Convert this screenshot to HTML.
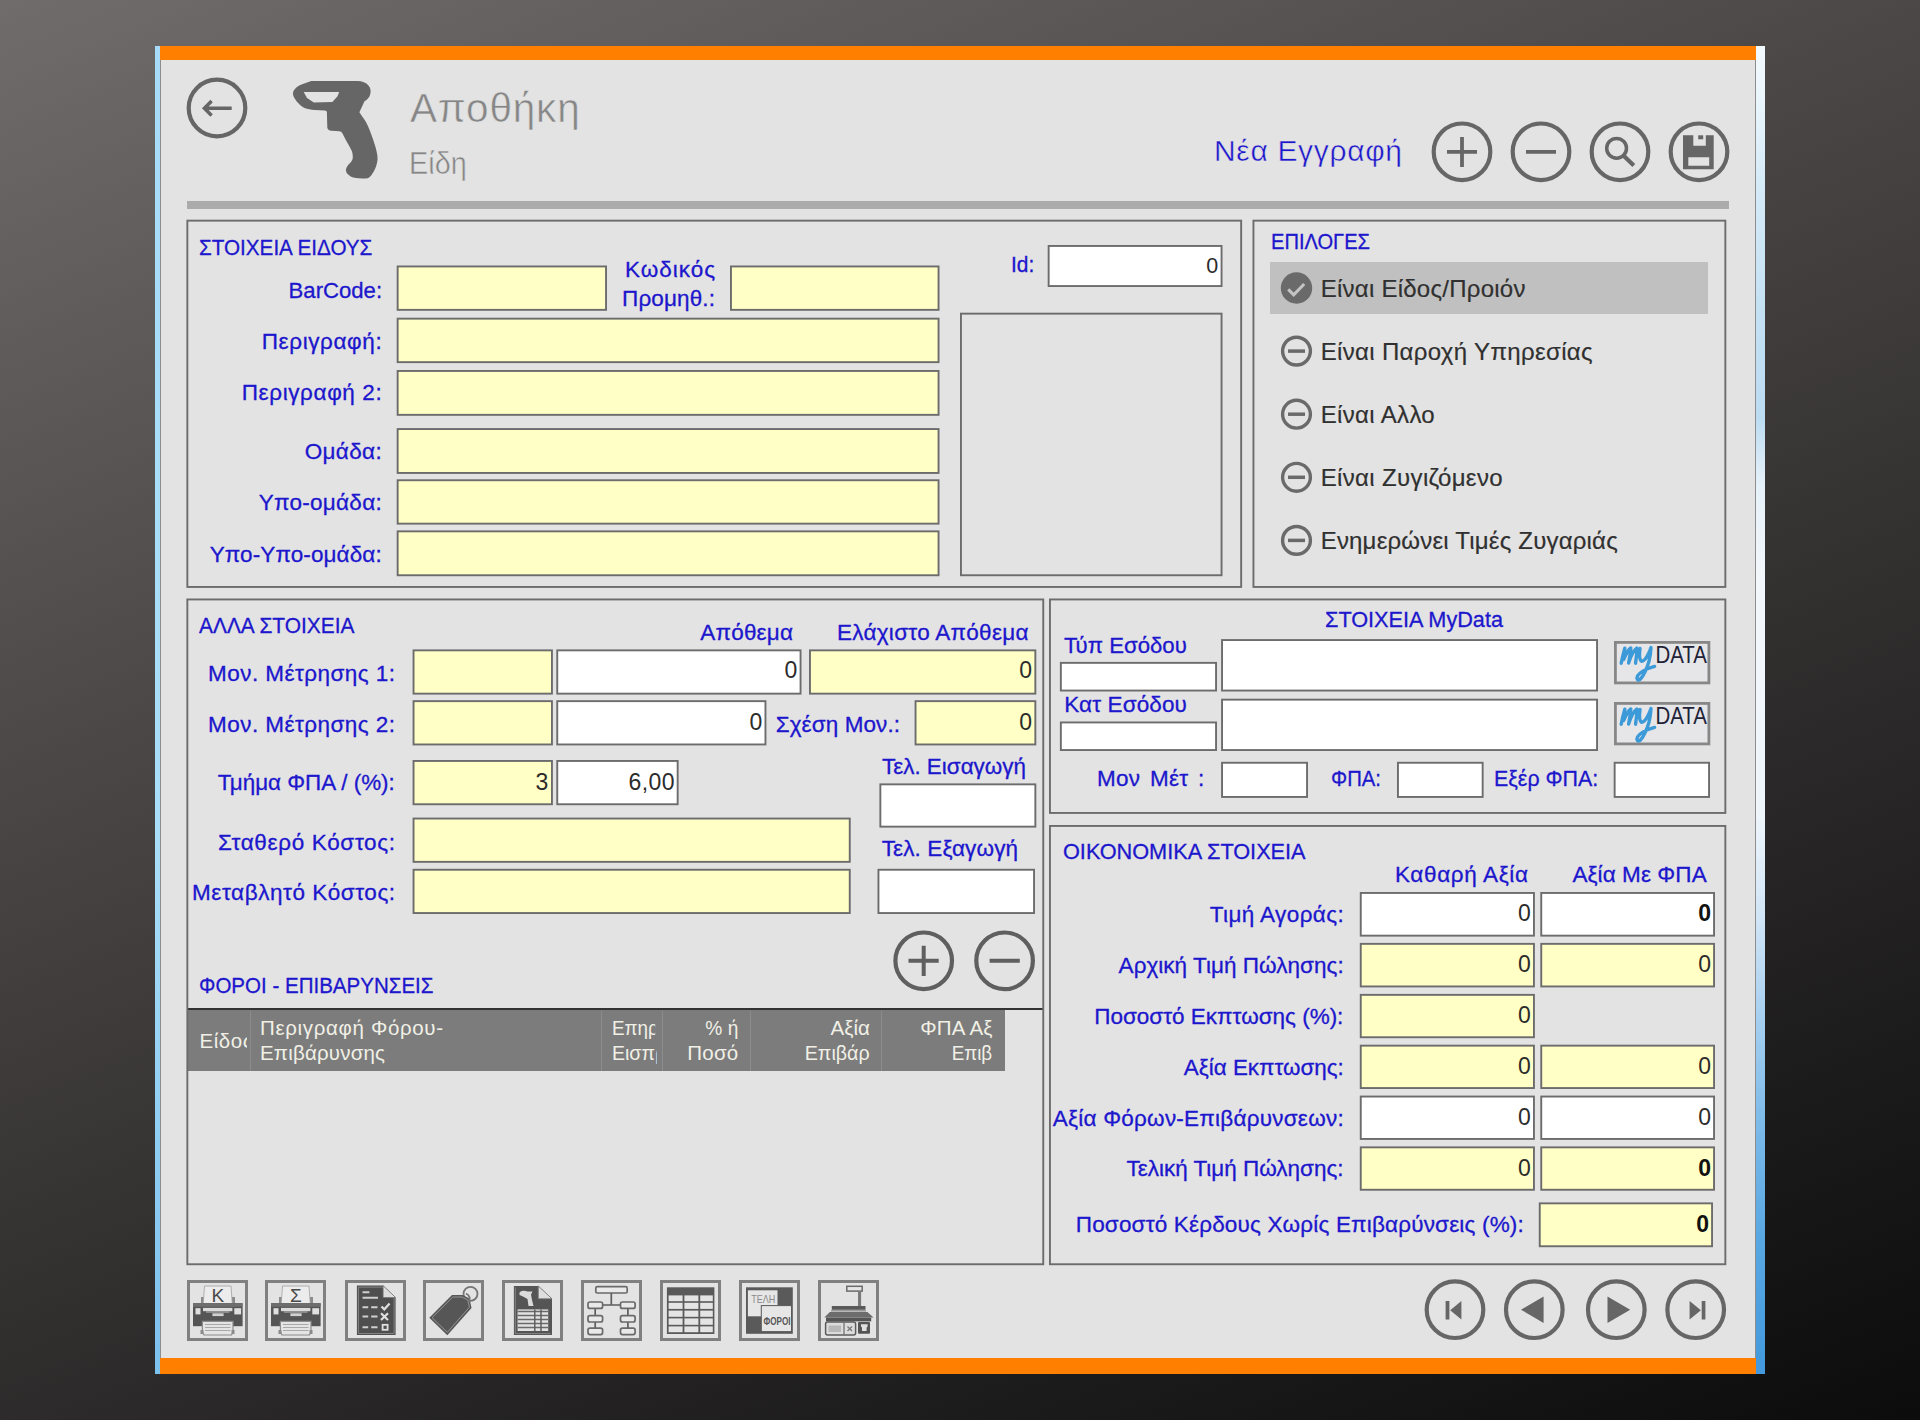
<!DOCTYPE html>
<html lang="el">
<head>
<meta charset="utf-8">
<title>Αποθήκη - Είδη</title>
<style>
html,body{margin:0;padding:0}
body{width:1920px;height:1420px;overflow:hidden;position:relative;
 font-family:"Liberation Sans",sans-serif;
 background:linear-gradient(158.3deg,#706c6b 0%,#4b4746 36%,#2b2929 67%,#0c0c0c 100%);}
#win{position:absolute;left:0;top:0;width:1920px;height:1420px}
.b{position:absolute;box-sizing:border-box}
.t{position:absolute;white-space:pre;margin:0;padding:0}
svg{position:absolute;overflow:visible}
</style>
</head>
<body>
<div id="win">
<div class="b" style="left:155.0px;top:46.0px;width:5.5px;height:1328.0px;background:linear-gradient(180deg,#a6dcfa 0%,#a9def9 60%,#7cc0ee 100%);"></div>
<div class="b" style="left:1756.0px;top:46.0px;width:9.0px;height:1328.0px;background:linear-gradient(180deg,#f3fafe 0%,#eaf5fc 4%,#d6ebf8 10%,#c4e1f4 20%,#bcdcf2 28%,#e6f1f9 33%,#f2f7fb 40%,#eef5fb 58%,#cfe4f6 66%,#a2cdef 74%,#78b8e8 82%,#58a7e2 90%,#4399dc 100%);"></div>
<div class="b" style="left:160.0px;top:46.0px;width:1596.0px;height:1328.0px;background:#ff8000;"></div>
<div class="b" style="left:160.0px;top:60.0px;width:1596.0px;height:1298.0px;background:#e3e3e3;"></div>
<div class="b" style="left:160.0px;top:60.0px;width:1.0px;height:1298.0px;background:#8e8e8e;"></div>
<div class="b" style="left:1754.5px;top:60.0px;width:1.5px;height:1298.0px;background:#8e8e8e;"></div>
<div class="b" style="left:187.0px;top:201.0px;width:1542.0px;height:8.0px;background:#ababab;"></div>
<div class="b" style="left:1270.4px;top:262.0px;width:437.8px;height:52.0px;background:#c0c0c0;"></div>
<div class="b" style="left:187.5px;top:1008.0px;width:855.0px;height:2.0px;background:#333333;"></div>
<div class="b" style="left:188.0px;top:1010.0px;width:817.0px;height:60.6px;background:#7c7c7c;"></div>
<div class="b" style="left:249.5px;top:1010.5px;width:1.0px;height:60.1px;background:#8c8c8c;"></div>
<div class="b" style="left:600.9px;top:1010.5px;width:1.0px;height:60.1px;background:#8c8c8c;"></div>
<div class="b" style="left:661.7px;top:1010.5px;width:1.0px;height:60.1px;background:#8c8c8c;"></div>
<div class="b" style="left:749.9px;top:1010.5px;width:1.0px;height:60.1px;background:#8c8c8c;"></div>
<div class="b" style="left:880.5px;top:1010.5px;width:1.0px;height:60.1px;background:#8c8c8c;"></div>
<svg style="left:0;top:0" width="1920" height="1420" viewBox="0 0 1920 1420"><rect x="187.35" y="220.65" width="1053.80" height="366.30" fill="none" stroke="#6c6c6c" stroke-width="1.9"/><rect x="397.65" y="266.45" width="208.40" height="43.40" fill="#ffffc6" stroke="#6c6c6c" stroke-width="1.9"/><rect x="730.95" y="266.45" width="207.60" height="43.40" fill="#ffffc6" stroke="#6c6c6c" stroke-width="1.9"/><rect x="397.65" y="318.65" width="540.90" height="43.50" fill="#ffffc6" stroke="#6c6c6c" stroke-width="1.9"/><rect x="397.65" y="370.95" width="540.90" height="43.90" fill="#ffffc6" stroke="#6c6c6c" stroke-width="1.9"/><rect x="397.65" y="429.05" width="540.90" height="43.90" fill="#ffffc6" stroke="#6c6c6c" stroke-width="1.9"/><rect x="397.65" y="480.25" width="540.90" height="43.40" fill="#ffffc6" stroke="#6c6c6c" stroke-width="1.9"/><rect x="397.65" y="531.35" width="540.90" height="43.90" fill="#ffffc6" stroke="#6c6c6c" stroke-width="1.9"/><rect x="1048.65" y="245.95" width="172.90" height="40.10" fill="#ffffff" stroke="#6c6c6c" stroke-width="1.9"/><rect x="960.95" y="313.65" width="260.60" height="261.60" fill="none" stroke="#6c6c6c" stroke-width="1.9"/><rect x="1253.45" y="220.65" width="471.90" height="366.30" fill="none" stroke="#6c6c6c" stroke-width="1.9"/><rect x="187.35" y="599.45" width="855.90" height="664.80" fill="none" stroke="#6c6c6c" stroke-width="1.9"/><rect x="413.55" y="650.35" width="138.40" height="43.30" fill="#ffffc6" stroke="#6c6c6c" stroke-width="1.9"/><rect x="557.25" y="650.35" width="243.30" height="43.30" fill="#ffffff" stroke="#6c6c6c" stroke-width="1.9"/><rect x="809.95" y="650.35" width="225.40" height="43.30" fill="#ffffc6" stroke="#6c6c6c" stroke-width="1.9"/><rect x="413.55" y="701.15" width="138.40" height="43.30" fill="#ffffc6" stroke="#6c6c6c" stroke-width="1.9"/><rect x="557.25" y="701.15" width="208.20" height="43.30" fill="#ffffff" stroke="#6c6c6c" stroke-width="1.9"/><rect x="915.55" y="701.15" width="119.80" height="43.30" fill="#ffffc6" stroke="#6c6c6c" stroke-width="1.9"/><rect x="413.55" y="760.95" width="138.40" height="43.30" fill="#ffffc6" stroke="#6c6c6c" stroke-width="1.9"/><rect x="557.25" y="760.95" width="120.40" height="43.30" fill="#ffffff" stroke="#6c6c6c" stroke-width="1.9"/><rect x="413.55" y="818.55" width="436.20" height="43.30" fill="#ffffc6" stroke="#6c6c6c" stroke-width="1.9"/><rect x="413.55" y="869.75" width="436.20" height="43.30" fill="#ffffc6" stroke="#6c6c6c" stroke-width="1.9"/><rect x="880.35" y="784.35" width="155.00" height="42.30" fill="#ffffff" stroke="#6c6c6c" stroke-width="1.9"/><rect x="878.45" y="869.75" width="155.60" height="43.30" fill="#ffffff" stroke="#6c6c6c" stroke-width="1.9"/><rect x="1049.95" y="599.45" width="675.40" height="213.50" fill="none" stroke="#6c6c6c" stroke-width="1.9"/><rect x="1060.85" y="662.85" width="155.20" height="27.70" fill="#ffffff" stroke="#6c6c6c" stroke-width="1.9"/><rect x="1222.05" y="640.05" width="375.00" height="50.50" fill="#ffffff" stroke="#6c6c6c" stroke-width="1.9"/><rect x="1060.85" y="722.45" width="155.20" height="27.60" fill="#ffffff" stroke="#6c6c6c" stroke-width="1.9"/><rect x="1222.05" y="699.65" width="375.00" height="50.40" fill="#ffffff" stroke="#6c6c6c" stroke-width="1.9"/><rect x="1222.05" y="762.75" width="85.00" height="34.20" fill="#ffffff" stroke="#6c6c6c" stroke-width="1.9"/><rect x="1397.95" y="762.75" width="84.70" height="34.20" fill="#ffffff" stroke="#6c6c6c" stroke-width="1.9"/><rect x="1614.65" y="762.75" width="94.40" height="34.20" fill="#ffffff" stroke="#6c6c6c" stroke-width="1.9"/><rect x="1049.95" y="825.95" width="675.40" height="438.30" fill="none" stroke="#6c6c6c" stroke-width="1.9"/><rect x="1360.75" y="892.95" width="173.20" height="42.70" fill="#ffffff" stroke="#6c6c6c" stroke-width="1.9"/><rect x="1541.25" y="892.95" width="172.80" height="42.70" fill="#ffffff" stroke="#6c6c6c" stroke-width="1.9"/><rect x="1360.75" y="943.85" width="173.20" height="42.60" fill="#ffffc6" stroke="#6c6c6c" stroke-width="1.9"/><rect x="1541.25" y="943.85" width="172.80" height="42.60" fill="#ffffc6" stroke="#6c6c6c" stroke-width="1.9"/><rect x="1360.75" y="994.85" width="173.20" height="42.40" fill="#ffffc6" stroke="#6c6c6c" stroke-width="1.9"/><rect x="1360.75" y="1045.65" width="173.20" height="42.40" fill="#ffffc6" stroke="#6c6c6c" stroke-width="1.9"/><rect x="1541.25" y="1045.65" width="172.80" height="42.40" fill="#ffffc6" stroke="#6c6c6c" stroke-width="1.9"/><rect x="1360.75" y="1096.55" width="173.20" height="42.40" fill="#ffffff" stroke="#6c6c6c" stroke-width="1.9"/><rect x="1541.25" y="1096.55" width="172.80" height="42.40" fill="#ffffff" stroke="#6c6c6c" stroke-width="1.9"/><rect x="1360.75" y="1147.35" width="173.20" height="42.40" fill="#ffffc6" stroke="#6c6c6c" stroke-width="1.9"/><rect x="1541.25" y="1147.35" width="172.80" height="42.40" fill="#ffffc6" stroke="#6c6c6c" stroke-width="1.9"/><rect x="1539.75" y="1203.35" width="172.30" height="42.90" fill="#ffffc6" stroke="#6c6c6c" stroke-width="1.9"/></svg>
<div class="t" style="top:85px;font-size:40.5px;line-height:46px;color:#868686;letter-spacing:0.83px;-webkit-text-stroke:0.55px #e3e3e3;left:410.0px;">Αποθήκη</div>
<div class="t" style="top:145px;font-size:31.5px;line-height:36px;color:#868686;-webkit-text-stroke:0.5px #e3e3e3;left:409.0px;transform:scaleX(0.915);transform-origin:left center;">Είδη</div>
<div class="t" style="top:134px;font-size:30px;line-height:33px;color:#1c16cc;letter-spacing:0.67px;-webkit-text-stroke:0.45px #e3e3e3;left:1214.0px;">Νέα Εγγραφή</div>
<div class="t" style="top:235px;font-size:22px;line-height:25px;color:#1c16cc;-webkit-text-stroke:0.3px;left:199.0px;transform:scaleX(0.939);transform-origin:left center;">ΣΤΟΙΧΕΙΑ ΕΙΔΟΥΣ</div>
<div class="t" style="top:278px;font-size:22.5px;line-height:25px;color:#1c16cc;-webkit-text-stroke:0.3px;right:1538.3px;transform:scaleX(0.983);transform-origin:right center;">BarCode:</div>
<div class="t" style="top:257px;font-size:22.5px;line-height:25px;color:#1c16cc;letter-spacing:0.97px;-webkit-text-stroke:0.3px;right:1204.0px;">Κωδικός</div>
<div class="t" style="top:286px;font-size:22.5px;line-height:25px;color:#1c16cc;letter-spacing:0.13px;-webkit-text-stroke:0.3px;right:1204.9px;">Προμηθ.:</div>
<div class="t" style="top:329px;font-size:22.5px;line-height:25px;color:#1c16cc;letter-spacing:0.61px;-webkit-text-stroke:0.3px;right:1537.7px;">Περιγραφή:</div>
<div class="t" style="top:380px;font-size:22.5px;line-height:25px;color:#1c16cc;letter-spacing:0.61px;-webkit-text-stroke:0.3px;right:1537.7px;">Περιγραφή 2:</div>
<div class="t" style="top:439px;font-size:22.5px;line-height:25px;color:#1c16cc;letter-spacing:0.35px;-webkit-text-stroke:0.3px;right:1538.0px;">Ομάδα:</div>
<div class="t" style="top:490px;font-size:22.5px;line-height:25px;color:#1c16cc;letter-spacing:0.28px;-webkit-text-stroke:0.3px;right:1538.0px;">Υπο-ομάδα:</div>
<div class="t" style="top:542px;font-size:22.5px;line-height:25px;color:#1c16cc;letter-spacing:0.10px;-webkit-text-stroke:0.3px;right:1538.2px;">Υπο-Υπο-ομάδα:</div>
<div class="t" style="top:252px;font-size:22.5px;line-height:25px;color:#1c16cc;-webkit-text-stroke:0.3px;left:1011.0px;transform:scaleX(0.931);transform-origin:left center;">Id:</div>
<div class="t" style="top:254px;font-size:21.5px;line-height:24px;color:#2b2b2b;right:701.7px;">0</div>
<div class="t" style="top:229px;font-size:22px;line-height:25px;color:#1c16cc;-webkit-text-stroke:0.3px;left:1271.0px;transform:scaleX(0.913);transform-origin:left center;">ΕΠΙΛΟΓΕΣ</div>
<div class="t" style="top:275px;font-size:24px;line-height:27px;color:#303030;letter-spacing:0.25px;-webkit-text-stroke:0.2px;left:1320.7px;">Είναι Είδος/Προιόν</div>
<div class="t" style="top:338px;font-size:24px;line-height:27px;color:#303030;letter-spacing:0.34px;-webkit-text-stroke:0.2px;left:1320.7px;">Είναι Παροχή Υπηρεσίας</div>
<div class="t" style="top:401px;font-size:24px;line-height:27px;color:#303030;letter-spacing:0.35px;-webkit-text-stroke:0.2px;left:1320.7px;">Είναι Αλλο</div>
<div class="t" style="top:464px;font-size:24px;line-height:27px;color:#303030;letter-spacing:0.36px;-webkit-text-stroke:0.2px;left:1320.7px;">Είναι Ζυγιζόμενο</div>
<div class="t" style="top:527px;font-size:24px;line-height:27px;color:#303030;letter-spacing:0.19px;-webkit-text-stroke:0.2px;left:1320.7px;">Ενημερώνει Τιμές Ζυγαριάς</div>
<div class="t" style="top:613px;font-size:22px;line-height:25px;color:#1c16cc;-webkit-text-stroke:0.3px;left:199.0px;transform:scaleX(0.950);transform-origin:left center;">ΑΛΛΑ ΣΤΟΙΧΕΙΑ</div>
<div class="t" style="top:620px;font-size:22.5px;line-height:25px;color:#1c16cc;letter-spacing:0.19px;-webkit-text-stroke:0.3px;left:700.3px;">Απόθεμα</div>
<div class="t" style="top:620px;font-size:22.5px;line-height:25px;color:#1c16cc;letter-spacing:0.28px;-webkit-text-stroke:0.3px;left:837.0px;">Ελάχιστο Απόθεμα</div>
<div class="t" style="top:661px;font-size:22.5px;line-height:25px;color:#1c16cc;letter-spacing:0.45px;-webkit-text-stroke:0.3px;right:1524.5px;">Μον. Μέτρησης 1:</div>
<div class="t" style="top:712px;font-size:22.5px;line-height:25px;color:#1c16cc;letter-spacing:0.45px;-webkit-text-stroke:0.3px;right:1524.5px;">Μον. Μέτρησης 2:</div>
<div class="t" style="top:770px;font-size:22.5px;line-height:25px;color:#1c16cc;-webkit-text-stroke:0.3px;right:1525.0px;transform:scaleX(0.996);transform-origin:right center;">Τμήμα ΦΠΑ / (%):</div>
<div class="t" style="top:830px;font-size:22.5px;line-height:25px;color:#1c16cc;letter-spacing:0.66px;-webkit-text-stroke:0.3px;right:1524.3px;">Σταθερό Κόστος:</div>
<div class="t" style="top:880px;font-size:22.5px;line-height:25px;color:#1c16cc;letter-spacing:0.56px;-webkit-text-stroke:0.3px;right:1524.4px;">Μεταβλητό Κόστος:</div>
<div class="t" style="top:657px;font-size:23px;line-height:26px;color:#2b2b2b;right:1122.7px;">0</div>
<div class="t" style="top:657px;font-size:23px;line-height:26px;color:#2b2b2b;right:888.0px;">0</div>
<div class="t" style="top:709px;font-size:23px;line-height:26px;color:#2b2b2b;right:1157.7px;">0</div>
<div class="t" style="top:712px;font-size:22.5px;line-height:25px;color:#1c16cc;letter-spacing:0.09px;-webkit-text-stroke:0.3px;left:775.7px;">Σχέση Μον.:</div>
<div class="t" style="top:709px;font-size:23px;line-height:26px;color:#2b2b2b;right:888.0px;">0</div>
<div class="t" style="top:769px;font-size:23px;line-height:26px;color:#2b2b2b;right:1371.7px;">3</div>
<div class="t" style="top:769px;font-size:23px;line-height:26px;color:#2b2b2b;letter-spacing:0.41px;right:1245.1px;">6,00</div>
<div class="t" style="top:754px;font-size:22.5px;line-height:25px;color:#1c16cc;-webkit-text-stroke:0.3px;left:881.7px;transform:scaleX(0.996);transform-origin:left center;">Τελ. Εισαγωγή</div>
<div class="t" style="top:836px;font-size:22.5px;line-height:25px;color:#1c16cc;letter-spacing:0.11px;-webkit-text-stroke:0.3px;left:881.7px;">Τελ. Εξαγωγή</div>
<div class="t" style="top:973px;font-size:22px;line-height:25px;color:#1c16cc;-webkit-text-stroke:0.3px;left:199.0px;transform:scaleX(0.933);transform-origin:left center;">ΦΟΡΟΙ - ΕΠΙΒΑΡΥΝΣΕΙΣ</div>
<div class="t" style="top:1029px;font-size:20.5px;line-height:23px;color:#f1f0e6;letter-spacing:0.52px;left:199.6px;width:47.2px;overflow:hidden;">Είδος</div>
<div class="t" style="top:1016px;font-size:20.5px;line-height:23px;color:#f1f0e6;letter-spacing:0.66px;left:260.0px;">Περιγραφή Φόρου-</div>
<div class="t" style="top:1041px;font-size:20.5px;line-height:23px;color:#f1f0e6;letter-spacing:0.19px;left:260.0px;">Επιβάρυνσης</div>
<div class="t" style="top:1016px;font-size:20.5px;line-height:23px;color:#f1f0e6;left:611.5px;width:47.0px;overflow:hidden;transform:scaleX(0.920);transform-origin:left center;">Επηρ</div>
<div class="t" style="top:1041px;font-size:20.5px;line-height:23px;color:#f1f0e6;left:611.5px;width:47.0px;overflow:hidden;transform:scaleX(0.953);transform-origin:left center;">Εισπρ</div>
<div class="t" style="top:1016px;font-size:20.5px;line-height:23px;color:#f1f0e6;right:1181.7px;transform:scaleX(0.934);transform-origin:right center;">% ή</div>
<div class="t" style="top:1041px;font-size:20.5px;line-height:23px;color:#f1f0e6;letter-spacing:0.24px;right:1181.5px;">Ποσό</div>
<div class="t" style="top:1016px;font-size:20.5px;line-height:23px;color:#f1f0e6;letter-spacing:0.04px;right:1050.0px;">Αξία</div>
<div class="t" style="top:1041px;font-size:20.5px;line-height:23px;color:#f1f0e6;right:1050.0px;transform:scaleX(0.960);transform-origin:right center;">Επιβάρ</div>
<div class="t" style="top:1016px;font-size:20.5px;line-height:23px;color:#f1f0e6;letter-spacing:0.22px;right:927.3px;">ΦΠΑ Αξ</div>
<div class="t" style="top:1041px;font-size:20.5px;line-height:23px;color:#f1f0e6;right:927.5px;transform:scaleX(0.917);transform-origin:right center;">Επιβ</div>
<div class="t" style="top:607px;font-size:22px;line-height:25px;color:#1c16cc;-webkit-text-stroke:0.3px;left:1325.0px;transform:scaleX(0.985);transform-origin:left center;">ΣΤΟΙΧΕΙΑ MyData</div>
<div class="t" style="top:633px;font-size:22.5px;line-height:25px;color:#1c16cc;-webkit-text-stroke:0.3px;left:1064.2px;transform:scaleX(0.985);transform-origin:left center;">Τύπ Εσόδου</div>
<div class="t" style="top:692px;font-size:22.5px;line-height:25px;color:#1c16cc;letter-spacing:0.12px;-webkit-text-stroke:0.3px;left:1064.2px;">Κατ Εσόδου</div>
<div class="t" style="top:766px;font-size:22.5px;line-height:25px;color:#1c16cc;letter-spacing:0.30px;word-spacing:3px;-webkit-text-stroke:0.3px;left:1097.0px;">Μον Μέτ :</div>
<div class="t" style="top:766px;font-size:22.5px;line-height:25px;color:#1c16cc;-webkit-text-stroke:0.3px;left:1330.6px;transform:scaleX(0.901);transform-origin:left center;">ΦΠΑ:</div>
<div class="t" style="top:766px;font-size:22.5px;line-height:25px;color:#1c16cc;-webkit-text-stroke:0.3px;left:1493.7px;transform:scaleX(0.951);transform-origin:left center;">Εξέρ ΦΠΑ:</div>
<div class="t" style="top:839px;font-size:22px;line-height:25px;color:#1c16cc;-webkit-text-stroke:0.3px;left:1062.5px;transform:scaleX(0.986);transform-origin:left center;">ΟΙΚΟΝΟΜΙΚΑ ΣΤΟΙΧΕΙΑ</div>
<div class="t" style="top:862px;font-size:22.5px;line-height:25px;color:#1c16cc;letter-spacing:0.63px;-webkit-text-stroke:0.3px;left:1395.0px;">Καθαρή Αξία</div>
<div class="t" style="top:862px;font-size:22.5px;line-height:25px;color:#1c16cc;letter-spacing:0.07px;-webkit-text-stroke:0.3px;left:1572.4px;">Αξία Με ΦΠΑ</div>
<div class="t" style="top:902px;font-size:22.5px;line-height:25px;color:#1c16cc;letter-spacing:0.39px;-webkit-text-stroke:0.3px;right:575.9px;">Τιμή Αγοράς:</div>
<div class="t" style="top:900px;font-size:23px;line-height:26px;color:#2b2b2b;right:389.3px;">0</div>
<div class="t" style="top:900px;font-size:23px;line-height:26px;color:#111111;font-weight:700;right:209.0px;">0</div>
<div class="t" style="top:953px;font-size:22.5px;line-height:25px;color:#1c16cc;letter-spacing:0.03px;-webkit-text-stroke:0.3px;right:576.3px;">Αρχική Τιμή Πώλησης:</div>
<div class="t" style="top:951px;font-size:23px;line-height:26px;color:#2b2b2b;right:389.3px;">0</div>
<div class="t" style="top:951px;font-size:23px;line-height:26px;color:#2b2b2b;right:209.0px;">0</div>
<div class="t" style="top:1004px;font-size:22.5px;line-height:25px;color:#1c16cc;-webkit-text-stroke:0.3px;right:576.3px;transform:scaleX(0.999);transform-origin:right center;">Ποσοστό Εκπτωσης (%):</div>
<div class="t" style="top:1002px;font-size:23px;line-height:26px;color:#2b2b2b;right:389.3px;">0</div>
<div class="t" style="top:1055px;font-size:22.5px;line-height:25px;color:#1c16cc;-webkit-text-stroke:0.3px;right:576.3px;transform:scaleX(0.995);transform-origin:right center;">Αξία Εκπτωσης:</div>
<div class="t" style="top:1053px;font-size:23px;line-height:26px;color:#2b2b2b;right:389.3px;">0</div>
<div class="t" style="top:1053px;font-size:23px;line-height:26px;color:#2b2b2b;right:209.0px;">0</div>
<div class="t" style="top:1106px;font-size:22.5px;line-height:25px;color:#1c16cc;letter-spacing:0.23px;-webkit-text-stroke:0.3px;right:576.1px;">Αξία Φόρων-Επιβάρυνσεων:</div>
<div class="t" style="top:1104px;font-size:23px;line-height:26px;color:#2b2b2b;right:389.3px;">0</div>
<div class="t" style="top:1104px;font-size:23px;line-height:26px;color:#2b2b2b;right:209.0px;">0</div>
<div class="t" style="top:1156px;font-size:22.5px;line-height:25px;color:#1c16cc;-webkit-text-stroke:0.3px;right:576.3px;transform:scaleX(0.998);transform-origin:right center;">Τελική Τιμή Πώλησης:</div>
<div class="t" style="top:1155px;font-size:23px;line-height:26px;color:#2b2b2b;right:389.3px;">0</div>
<div class="t" style="top:1155px;font-size:23px;line-height:26px;color:#111111;font-weight:700;right:209.0px;">0</div>
<div class="t" style="top:1212px;font-size:22.5px;line-height:25px;color:#1c16cc;letter-spacing:0.17px;-webkit-text-stroke:0.3px;right:396.1px;">Ποσοστό Κέρδους Χωρίς Επιβαρύνσεις (%):</div>
<div class="t" style="top:1211px;font-size:23px;line-height:26px;color:#111111;font-weight:700;right:211.0px;">0</div>
<svg style="left:0px;top:0px" width="1920" height="1420" viewBox="0 0 1920 1420"><circle cx="217" cy="108" r="28.3" fill="none" stroke="#666666" stroke-width="4.2"/><path d="M231.7 108.3H204.6M211.6 101.1L204.4 108.3L211.6 115.5" fill="none" stroke="#666666" stroke-width="3.5" stroke-linejoin="miter"/><path fill="#666" fill-rule="evenodd" d="M311.3 81H357.7C362 81 366.2 82.5 368.5 85.5C371 88.5 371.3 92 369.6 96.2C368 99 366 100.5 364.5 101.3L359.4 112.3C362 116 364 119 366.2 122.4C369 128 371 133 373 139.3C375 145 376.5 150 377.2 154.5C377.8 158 377.6 161 376.8 163.8C375.8 168 374.3 171 372.1 174C371 176 369.5 177.5 367.9 178.2C363 178.8 359 178.6 354.4 177.8C352 177.3 350 176.3 348.5 174.8C346.8 173.3 345.8 171.5 345.9 169.7C346.3 167.5 347.7 165.6 349.3 163.8C350.8 162.2 352.2 160.6 352.7 158.7C353 156 352.6 153.5 351.8 151.1C350.5 148 348.7 145 346.8 141.8C345.4 139 344 136 342.5 133.4C341.7 132 340.6 131.4 339.2 131.3L331.5 130.8C329 130.5 327.4 129.3 327.3 127.5L326.9 112.3C326.8 111.2 326 110.7 324.8 110.6L314.6 110.1C311 109.8 307.5 109.1 304.5 108C302 106.8 299.9 105.1 298.2 103C296.2 101 294.6 98.7 293.5 96.2C292.8 94.5 292.8 92.8 293.5 91.1C294.3 89.4 295.5 88 296.9 86.9C298.7 85.6 300.7 84.6 302.8 83.9ZM303.7 92L307 97.9L313.8 102.5L332.4 102.1L337.5 96.2L339.2 92Z"/><circle cx="1462" cy="151.8" r="28.3" fill="none" stroke="#666666" stroke-width="4.2"/><circle cx="1541" cy="151.8" r="28.3" fill="none" stroke="#666666" stroke-width="4.2"/><circle cx="1620" cy="151.8" r="28.3" fill="none" stroke="#666666" stroke-width="4.2"/><circle cx="1699" cy="151.8" r="28.3" fill="none" stroke="#666666" stroke-width="4.2"/><path d="M1447 151.8H1477M1462 137V167M1526 151.8H1556" stroke="#666666" stroke-width="3.8" fill="none"/><circle cx="1616.6" cy="148.3" r="9.9" fill="none" stroke="#666666" stroke-width="3.5"/><path d="M1623.4 155.6L1633.8 165.6" stroke="#666666" stroke-width="4.2"/><path fill="#666666" fill-rule="evenodd" d="M1683 135.3H1713.7V169.2H1683ZM1693.3 135.3V145.8H1705.8V135.3ZM1688.3 157.2V165.8H1709.2V157.2Z"/><rect x="1698.2" y="135.3" width="5" height="4" fill="#666666"/><circle cx="1296.5" cy="288" r="15.7" fill="#6a6a6a"/><path d="M1288.2 289.3L1293.7 294.8L1304.2 284" fill="none" stroke="#c4c4c4" stroke-width="3.1"/><circle cx="1296.5" cy="351.1" r="13.9" fill="none" stroke="#6a6a6a" stroke-width="3.4"/><path d="M1288 351.1H1305" stroke="#6a6a6a" stroke-width="3.5"/><circle cx="1296.5" cy="414.2" r="13.9" fill="none" stroke="#6a6a6a" stroke-width="3.4"/><path d="M1288 414.2H1305" stroke="#6a6a6a" stroke-width="3.5"/><circle cx="1296.5" cy="477.3" r="13.9" fill="none" stroke="#6a6a6a" stroke-width="3.4"/><path d="M1288 477.3H1305" stroke="#6a6a6a" stroke-width="3.5"/><circle cx="1296.5" cy="540.4" r="13.9" fill="none" stroke="#6a6a6a" stroke-width="3.4"/><path d="M1288 540.4H1305" stroke="#6a6a6a" stroke-width="3.5"/><circle cx="923.7" cy="960.8" r="28.3" fill="none" stroke="#5f5f5f" stroke-width="4.2"/><circle cx="1004.6" cy="960.8" r="28.3" fill="none" stroke="#5f5f5f" stroke-width="4.2"/><path d="M908.5 960.8H938.7M923.7 945.7V976M989.6 960.8H1019.8" stroke="#5f5f5f" stroke-width="4" fill="none"/><circle cx="1455" cy="1309.7" r="28.3" fill="none" stroke="#666666" stroke-width="4.2"/><circle cx="1534.3" cy="1309.7" r="28.3" fill="none" stroke="#666666" stroke-width="4.2"/><circle cx="1616.3" cy="1309.7" r="28.3" fill="none" stroke="#666666" stroke-width="4.2"/><circle cx="1695.7" cy="1309.7" r="28.3" fill="none" stroke="#666666" stroke-width="4.2"/><path fill="#666666" d="M1445.6 1301H1449.4V1319.6H1445.6ZM1450.2 1310.3L1461.4 1301V1319.6ZM1521 1309.7L1543.6 1296.6V1322.9ZM1607.5 1296.6L1630.2 1309.7L1607.5 1322.9ZM1689.6 1301L1700.9 1310.3L1689.6 1319.6ZM1701.7 1301H1705.4V1319.6H1701.7Z"/></svg>
<svg style="left:186.5px;top:1279.5px" width="61" height="61" viewBox="0 0 61 61"><rect x="1.5" y="1.5" width="58" height="58" fill="none" stroke="#808080" stroke-width="3"/><path d="M14 17h3v8h-3zM45 17h3v8h-3z" fill="#8a8a8a"/><path d="M17.5 6L44 6L45.3 24H16.2Z" fill="#ececec" stroke="#a0a0a0" stroke-width="0.8"/><rect x="6" y="23.2" width="49.6" height="23" fill="#555555"/><rect x="6" y="23.2" width="49.6" height="3.6" fill="#6e6e6e"/><rect x="8.5" y="28.2" width="5" height="6.2" fill="#e0e0e0"/><rect x="47.3" y="28.2" width="6.8" height="6.2" fill="#e0e0e0"/><rect x="16" y="27.9" width="29.4" height="3.3" fill="#dcdcdc"/><rect x="19" y="31.2" width="23.5" height="1.6" fill="#9a9a9a"/><rect x="25.4" y="33.3" width="11.2" height="2.8" fill="#d0d0d0"/><path d="M15.4 41.3H46V52l-1.5 3H17L15.4 52Z" fill="#e4e4e4" stroke="#8c8c8c" stroke-width="1.2"/><path d="M18 44.5H43.5M18 47.5H43.5M18 50.5H43.5" stroke="#a8a8a8" stroke-width="1.2"/><path d="M13.5 50h3v4h-3zM44.5 50h3v4h-3z" fill="#8a8a8a"/><text x="30.8" y="22.3" font-family="Liberation Sans, sans-serif" font-size="19" text-anchor="middle" fill="#4a4a4a">Κ</text></svg>
<svg style="left:265.3px;top:1279.5px" width="61" height="61" viewBox="0 0 61 61"><rect x="1.5" y="1.5" width="58" height="58" fill="none" stroke="#808080" stroke-width="3"/><path d="M14 17h3v8h-3zM45 17h3v8h-3z" fill="#8a8a8a"/><path d="M17.5 6L44 6L45.3 24H16.2Z" fill="#ececec" stroke="#a0a0a0" stroke-width="0.8"/><rect x="6" y="23.2" width="49.6" height="23" fill="#555555"/><rect x="6" y="23.2" width="49.6" height="3.6" fill="#6e6e6e"/><rect x="8.5" y="28.2" width="5" height="6.2" fill="#e0e0e0"/><rect x="47.3" y="28.2" width="6.8" height="6.2" fill="#e0e0e0"/><rect x="16" y="27.9" width="29.4" height="3.3" fill="#dcdcdc"/><rect x="19" y="31.2" width="23.5" height="1.6" fill="#9a9a9a"/><rect x="25.4" y="33.3" width="11.2" height="2.8" fill="#d0d0d0"/><path d="M15.4 41.3H46V52l-1.5 3H17L15.4 52Z" fill="#e4e4e4" stroke="#8c8c8c" stroke-width="1.2"/><path d="M18 44.5H43.5M18 47.5H43.5M18 50.5H43.5" stroke="#a8a8a8" stroke-width="1.2"/><path d="M13.5 50h3v4h-3zM44.5 50h3v4h-3z" fill="#8a8a8a"/><text x="30.8" y="22.3" font-family="Liberation Sans, sans-serif" font-size="19" text-anchor="middle" fill="#4a4a4a">Σ</text></svg>
<svg style="left:344.5px;top:1279.5px" width="61" height="61" viewBox="0 0 61 61"><rect x="1.5" y="1.5" width="58" height="58" fill="none" stroke="#808080" stroke-width="3"/><path d="M11.9 5.6H38.1L50.6 17.5V55H11.9Z" fill="#4f4f4f"/><path d="M13.4 7.1H37.5L49.1 18.1V53.5H13.4Z" fill="none" stroke="#8a8a8a" stroke-width="0.9"/><path d="M38.1 5.6L50.6 17.5H38.1Z" fill="#dedede" stroke="#777" stroke-width="0.8"/><path d="M17.5 12.2H24.4M17.5 17.8H33M17.5 27.2H23.2M26.2 27.2H32.5M17.5 36.6H23.2M26.2 36.6H32.5M17.5 47.2H23.2M26.2 47.2H32.5" stroke="#cfcfcf" stroke-width="2"/><path d="M36.5 26.5L39.3 29.3L44.6 23.6" fill="none" stroke="#e0e0e0" stroke-width="2.2"/><path d="M36 33.3L43 40M43 33.3L36 40" stroke="#e0e0e0" stroke-width="2.2"/><rect x="37.6" y="44.8" width="5" height="5" fill="none" stroke="#e0e0e0" stroke-width="1.8"/></svg>
<svg style="left:423.3px;top:1279.5px" width="61" height="61" viewBox="0 0 61 61"><rect x="1.5" y="1.5" width="58" height="58" fill="none" stroke="#808080" stroke-width="3"/><circle cx="47.5" cy="13.8" r="7" fill="none" stroke="#757575" stroke-width="1.8"/><path d="M6.3 37.7L29 15H39.5L46.5 18.5L48.5 28L24.3 55.2Z" fill="#565656"/><path d="M9 37.7L29.8 17H39L44.8 20L46.4 27.3L24.3 52.3Z" fill="none" stroke="#9c9c9c" stroke-width="0.9"/><path d="M43 13.5C46 15 47.5 18 46 22" fill="none" stroke="#757575" stroke-width="1.8"/></svg>
<svg style="left:502.3px;top:1279.5px" width="61" height="61" viewBox="0 0 61 61"><rect x="1.5" y="1.5" width="58" height="58" fill="none" stroke="#808080" stroke-width="3"/><path d="M11.9 6H36.3L50 18.8V55H11.9Z" fill="#555"/><path d="M36.3 6L50 18.8H36.3Z" fill="#dedede" stroke="#777" stroke-width="0.8"/><path d="M17.5 12.5C19 10.5 23 10.5 25.5 11.5L30.5 11.5L29 14.5L30 20L31.5 26H26.5L25.5 19L21 16.5L17.5 15Z" fill="#dcdcdc"/><rect x="15.6" y="29.4" width="30.6" height="21.6" fill="#e2e2e2"/><path d="M15.6 31.5H46.2M15.6 35.5H46.2M15.6 39.5H46.2M15.6 43.5H46.2M15.6 47.5H46.2" stroke="#6a6a6a" stroke-width="1.5"/><path d="M32.8 29.4V51M39 29.4V51" stroke="#5a5a5a" stroke-width="1.4"/><path d="M13.3 7.4V53.6H48.6" fill="none" stroke="#8a8a8a" stroke-width="0.9"/></svg>
<svg style="left:581.2px;top:1279.5px" width="61" height="61" viewBox="0 0 61 61"><rect x="1.5" y="1.5" width="58" height="58" fill="none" stroke="#808080" stroke-width="3"/><path d="M30.3 13V25M21 25H40M14.2 28V49M46.9 28V49" stroke="#5e5e5e" stroke-width="1.7" fill="none"/><rect x="14.8" y="6.6" width="31.4" height="6.4" rx="1.6" fill="#e9e9e9" stroke="#6a6a6a" stroke-width="1.7"/><rect x="7" y="22" width="14.6" height="6.4" rx="2" fill="#e9e9e9" stroke="#6a6a6a" stroke-width="1.7"/><rect x="7" y="35.6" width="14.6" height="6.4" rx="2" fill="#e9e9e9" stroke="#6a6a6a" stroke-width="1.7"/><rect x="7" y="48.2" width="14.6" height="6.4" rx="2" fill="#e9e9e9" stroke="#6a6a6a" stroke-width="1.7"/><rect x="39.5" y="22" width="14.6" height="6.4" rx="2" fill="#e9e9e9" stroke="#6a6a6a" stroke-width="1.7"/><rect x="39.5" y="35.6" width="14.6" height="6.4" rx="2" fill="#e9e9e9" stroke="#6a6a6a" stroke-width="1.7"/><rect x="39.5" y="48.2" width="14.6" height="6.4" rx="2" fill="#e9e9e9" stroke="#6a6a6a" stroke-width="1.7"/></svg>
<svg style="left:660px;top:1279.5px" width="61" height="61" viewBox="0 0 61 61"><rect x="1.5" y="1.5" width="58" height="58" fill="none" stroke="#808080" stroke-width="3"/><rect x="6.9" y="7.3" width="47.5" height="46.7" fill="#5a5a5a"/><rect x="8.6" y="15.4" width="14.0" height="5.8" fill="#e4e4e4"/><rect x="24.4" y="15.4" width="14.0" height="5.8" fill="#e4e4e4"/><rect x="40.2" y="15.4" width="12.6" height="5.8" fill="#e4e4e4"/><rect x="8.6" y="22.8" width="14.0" height="6.1" fill="#e4e4e4"/><rect x="24.4" y="22.8" width="14.0" height="6.1" fill="#e4e4e4"/><rect x="40.2" y="22.8" width="12.6" height="6.1" fill="#e4e4e4"/><rect x="8.6" y="30.6" width="14.0" height="6.2" fill="#e4e4e4"/><rect x="24.4" y="30.6" width="14.0" height="6.2" fill="#e4e4e4"/><rect x="40.2" y="30.6" width="12.6" height="6.2" fill="#e4e4e4"/><rect x="8.6" y="38.4" width="14.0" height="6.4" fill="#e4e4e4"/><rect x="24.4" y="38.4" width="14.0" height="6.4" fill="#e4e4e4"/><rect x="40.2" y="38.4" width="12.6" height="6.4" fill="#e4e4e4"/><rect x="8.6" y="46.4" width="14.0" height="5.8" fill="#e4e4e4"/><rect x="24.4" y="46.4" width="14.0" height="5.8" fill="#e4e4e4"/><rect x="40.2" y="46.4" width="12.6" height="5.8" fill="#e4e4e4"/></svg>
<svg style="left:739px;top:1279.5px" width="61" height="61" viewBox="0 0 61 61"><rect x="1.5" y="1.5" width="58" height="58" fill="none" stroke="#808080" stroke-width="3"/><rect x="7" y="7.3" width="46.8" height="46.5" fill="#5a5a5a"/><rect x="8.9" y="10.3" width="29.6" height="26" fill="#e6e6e6"/><text x="12.3" y="23" font-family="Liberation Sans, sans-serif" font-size="10.5" fill="#8a8a8a" textLength="24" lengthAdjust="spacingAndGlyphs">ΤΕΛΗ</text><rect x="22.3" y="25.6" width="30.2" height="26" fill="#e6e6e6" stroke="#5a5a5a" stroke-width="1"/><text x="24.6" y="45" font-family="Liberation Sans, sans-serif" font-size="10.5" font-weight="700" fill="#555" textLength="27" lengthAdjust="spacingAndGlyphs">ΦΟΡΟΙ</text></svg>
<svg style="left:817.8px;top:1279.5px" width="61" height="61" viewBox="0 0 61 61"><rect x="1.5" y="1.5" width="58" height="58" fill="none" stroke="#808080" stroke-width="3"/><rect x="28.8" y="6.3" width="15.4" height="4.8" fill="#e4e4e4" stroke="#6a6a6a" stroke-width="1.5"/><rect x="40" y="11" width="3.1" height="15.5" fill="#7a7a7a"/><rect x="13.8" y="26" width="33.7" height="3.8" fill="#5a5a5a"/><rect x="13" y="30" width="35" height="1.6" fill="#9a9a9a"/><path d="M11.9 31.9H49.4L55.6 37.6H6.3Z" fill="#6c6c6c"/><rect x="8" y="37.6" width="45.2" height="3.8" fill="#555"/><rect x="7.6" y="42" width="30" height="13" rx="2" fill="#dcdcdc" stroke="#5c5c5c" stroke-width="1.5"/><path d="M26 42.5V54.5" stroke="#6a6a6a" stroke-width="1.2"/><rect x="10.5" y="45.5" width="12.5" height="6.5" fill="#b8b8b8"/><path d="M29.5 46.5l4.5 4.5m0 -4.5l-4.5 4.5" stroke="#777" stroke-width="1.3"/><rect x="40" y="42" width="12" height="11.8" rx="1" fill="#555"/><path d="M43 44.3H49.6V46.5L48.6 47.5V51H44V47.5L43 46.5Z" fill="#e0e0e0"/></svg>
<svg style="left:1613.8px;top:640.9px" width="96.3" height="43.3" viewBox="0 0 96.3 43.3"><rect x="1.4" y="1.4" width="93.5" height="40.5" fill="#e6e6e8" stroke="#878787" stroke-width="2.8"/><path d="M7.2 22.3C8.2 17 9.6 11.5 10.8 7.2C10.6 11 10 15 9.6 18.5C11.5 14 14 9 16.8 7C16.6 12 15.4 17 14.6 22C16.5 16 19.5 9.5 22.8 7C23.4 11 22 17 21.6 22.2M26 7.5C25.6 12 24.2 18 27.6 20.4C31 20 35.2 12.5 37 6.6C36.6 14 34.6 24 30.6 31.6C28.6 36 25 40.6 23.4 38.4C22 35.6 25.6 32 29.6 29.6C33 27.6 37 26.4 40.6 25.4" fill="none" stroke="#3d9ad8" stroke-width="3.4" stroke-linecap="round" stroke-linejoin="round"/><text x="41.5" y="22.4" font-family="Liberation Sans, sans-serif" font-size="23" fill="#1e2238" textLength="51.5" lengthAdjust="spacingAndGlyphs">DATA</text></svg>
<svg style="left:1613.8px;top:702.0px" width="96.3" height="43.3" viewBox="0 0 96.3 43.3"><rect x="1.4" y="1.4" width="93.5" height="40.5" fill="#e6e6e8" stroke="#878787" stroke-width="2.8"/><path d="M7.2 22.3C8.2 17 9.6 11.5 10.8 7.2C10.6 11 10 15 9.6 18.5C11.5 14 14 9 16.8 7C16.6 12 15.4 17 14.6 22C16.5 16 19.5 9.5 22.8 7C23.4 11 22 17 21.6 22.2M26 7.5C25.6 12 24.2 18 27.6 20.4C31 20 35.2 12.5 37 6.6C36.6 14 34.6 24 30.6 31.6C28.6 36 25 40.6 23.4 38.4C22 35.6 25.6 32 29.6 29.6C33 27.6 37 26.4 40.6 25.4" fill="none" stroke="#3d9ad8" stroke-width="3.4" stroke-linecap="round" stroke-linejoin="round"/><text x="41.5" y="22.4" font-family="Liberation Sans, sans-serif" font-size="23" fill="#1e2238" textLength="51.5" lengthAdjust="spacingAndGlyphs">DATA</text></svg>
</div>
</body>
</html>
